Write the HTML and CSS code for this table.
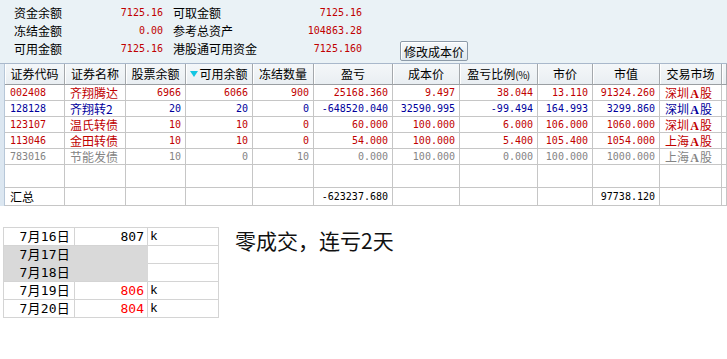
FILE: index.html
```html
<!DOCTYPE html>
<html lang="zh-CN">
<head>
<meta charset="utf-8">
<title>资金持仓</title>
<link rel="stylesheet" href="styles.css">
</head>
<body>
<div class="top">
  <div class="acct">
    <span class="lbl">资金余额</span><span class="val">7125.16</span><span class="lbl">可取金额</span><span class="val">7125.16</span><span class="sp"></span>
    <span class="lbl">冻结金额</span><span class="val">0.00</span><span class="lbl">参考总资产</span><span class="val">104863.28</span><span class="sp"></span>
    <span class="lbl">可用金额</span><span class="val">7125.16</span><span class="lbl">港股通可用资金</span><span class="val">7125.160</span><span class="sp"><button class="btn">修改成本价</button></span>
  </div>
</div>

<div class="area">
  <div class="strip"></div>
  <div class="tbl">
    <div class="row head">
      <div class="c">证券代码</div><div class="c">证券名称</div><div class="c">股票余额</div>
      <div class="c"><svg class="tri" width="8" height="7" viewBox="0 0 8 7"><path d="M0 0H8L4 6Z" fill="#12c6e2"/></svg>可用余额</div>
      <div class="c">冻结数量</div><div class="c">盈亏</div><div class="c">成本价</div>
      <div class="c">盈亏比例<span class="pct">(%)</span></div><div class="c">市价</div><div class="c">市值</div><div class="c">交易市场</div><div class="c"></div>
    </div>
    <div class="row body red">
      <div class="c n l">002408</div><div class="c t">齐翔腾达</div><div class="c n">6966</div><div class="c n">6066</div><div class="c n">900</div><div class="c n">25168.360</div><div class="c n">9.497</div><div class="c n">38.044</div><div class="c n">13.110</div><div class="c n">91324.260</div><div class="c t">深圳<b>A</b>股</div><div class="c"></div>
    </div>
    <div class="row body blue">
      <div class="c n l">128128</div><div class="c t">齐翔转2</div><div class="c n">20</div><div class="c n">20</div><div class="c n">0</div><div class="c n">-648520.040</div><div class="c n">32590.995</div><div class="c n">-99.494</div><div class="c n">164.993</div><div class="c n">3299.860</div><div class="c t">深圳<b>A</b>股</div><div class="c"></div>
    </div>
    <div class="row body red">
      <div class="c n l">123107</div><div class="c t">温氏转债</div><div class="c n">10</div><div class="c n">10</div><div class="c n">0</div><div class="c n">60.000</div><div class="c n">100.000</div><div class="c n">6.000</div><div class="c n">106.000</div><div class="c n">1060.000</div><div class="c t">深圳<b>A</b>股</div><div class="c"></div>
    </div>
    <div class="row body red">
      <div class="c n l">113046</div><div class="c t">金田转债</div><div class="c n">10</div><div class="c n">10</div><div class="c n">0</div><div class="c n">54.000</div><div class="c n">100.000</div><div class="c n">5.400</div><div class="c n">105.400</div><div class="c n">1054.000</div><div class="c t">上海<b>A</b>股</div><div class="c"></div>
    </div>
    <div class="row body gray">
      <div class="c n l">783016</div><div class="c t">节能发债</div><div class="c n">10</div><div class="c n">0</div><div class="c n">10</div><div class="c n">0.000</div><div class="c n">100.000</div><div class="c n">0.000</div><div class="c n">100.000</div><div class="c n">1000.000</div><div class="c t">上海<b>A</b>股</div><div class="c"></div>
    </div>
    <div class="row body empty">
      <div class="c"></div><div class="c"></div><div class="c"></div><div class="c"></div><div class="c"></div><div class="c"></div><div class="c"></div><div class="c"></div><div class="c"></div><div class="c"></div><div class="c"></div><div class="c"></div>
    </div>
    <div class="row body sum">
      <div class="c t">汇总</div><div class="c"></div><div class="c"></div><div class="c"></div><div class="c"></div><div class="c n">-623237.680</div><div class="c"></div><div class="c"></div><div class="c"></div><div class="c n">97738.120</div><div class="c"></div><div class="c"></div>
    </div>
  </div>
</div>

<div class="bottom">
  <div class="xl">
    <div class="x d">7月16日</div><div class="x v">807</div><div class="x k">k</div>
    <div class="x d g">7月17日</div><div class="x g"></div><div class="x k"></div>
    <div class="x d g gb">7月18日</div><div class="x g gb"></div><div class="x k"></div>
    <div class="x d">7月19日</div><div class="x v r">806</div><div class="x k">k</div>
    <div class="x d">7月20日</div><div class="x v r">804</div><div class="x k">k</div>
  </div>
  <div class="note">零成交，连亏2天</div>
</div>
</body>
</html>
```

FILE: styles.css
```css
* { box-sizing: border-box; }
html, body { margin: 0; padding: 0; background: #fff; }
body {
  font-family: "Noto Sans CJK SC", "DejaVu Sans", sans-serif;
  font-size: 12px;
  color: #000;
  width: 727px;
  overflow: hidden;
}

/* ---------- top account panel ---------- */
.top {
  height: 64px;
  background: #eaf2f6;
  border-bottom: 1px solid #a9b8cb;
  padding: 4px 0 0 14px;
}
.acct {
  display: grid;
  grid-template-columns: 60px 89px 80px 119px 1fr;
  grid-template-rows: repeat(3, 18px);
}
.acct > span { line-height: 18px; white-space: nowrap; }
.acct .lbl:nth-child(5n+3) { padding-left: 10px; }
.acct .val {
  text-align: right;
  color: #c00000;
  font-family: "DejaVu Sans Mono", monospace;
  font-size: 10px;
}
.btn {
  margin: 1px 0 0 38px;
  width: 68px;
  height: 20px;
  padding: 0;
  font-family: "Noto Sans CJK SC", sans-serif;
  font-size: 12px;
  line-height: 17px;
  color: #000;
  background: linear-gradient(#f6f9fb, #dfe8ee);
  border: 1px solid #8c9aa8;
  border-radius: 2px;
  box-shadow: inset 1px 1px 0 #fff;
}

/* ---------- holdings table ---------- */
.area { display: flex; }
.strip {
  width: 5px;
  background: #dce7f1;
  border-right: 1px solid #b7c7d8;
}
.tbl { flex: 1; }
.row {
  display: grid;
  grid-template-columns: 60px 61px 60px 67px 61px 79px 67px 78px 55px 67px 62px 1fr;
}
.c {
  border-right: 1px solid #c6c6c6;
  border-bottom: 1px solid #c6c6c6;
  white-space: nowrap;
}
.head .c {
  height: 21px;
  line-height: 20px;
  text-align: center;
  background: linear-gradient(#f4f7f9, #e9eef2);
  border-right-color: #a4a8ac;
  border-bottom-color: #9a9ea2;
  box-shadow: inset 1px 0 0 #fff;
}
.head .pct { font-size: 10px; letter-spacing: -0.5px; }
.tri { vertical-align: 1px; margin-right: 1px; }
.body .c { height: 16px; line-height: 15px; }
.body .n {
  text-align: right;
  padding-right: 4px;
  font-family: "DejaVu Sans Mono", monospace;
  font-size: 10px;
}
.body .n.l { text-align: left; padding-left: 5px; padding-right: 0; }
.body .t { padding-left: 5px; }
.body .t b {
  display: inline-block;
  width: 11px;
  text-align: center;
  font-family: "Liberation Serif", serif;
  font-weight: bold;
  font-size: 12px;
}
.red { color: #c00000; }
.blue { color: #00009c; }
.gray { color: #848484; }
.empty .c { height: 23px; }
.sum .c { height: 18px; line-height: 17px; }

/* ---------- bottom sheet ---------- */
.bottom {
  display: flex;
  align-items: flex-start;
  padding: 21px 0 0 3px;
}
.xl {
  display: grid;
  grid-template-columns: 71px 73px 71px;
  grid-template-rows: repeat(5, 18px);
  border-top: 1px solid #d4d4d4;
  border-left: 1px solid #d4d4d4;
  font-size: 13px;
}
.x {
  border-right: 1px solid #d4d4d4;
  border-bottom: 1px solid #d4d4d4;
  line-height: 17px;
  white-space: nowrap;
}
.x.d {
  text-align: right;
  padding-right: 4px;
  font-family: "DejaVu Sans Mono", "Noto Sans CJK SC", monospace;
  letter-spacing: 0.2px;
}
.x.v {
  text-align: right;
  padding-right: 3px;
  font-family: "DejaVu Sans Mono", monospace;
}
.x.r { color: #ff0000; }
.x.k {
  padding-left: 2px;
  font-family: "Liberation Mono", monospace;
  font-size: 13px;
}
.x.g {
  background: #d9d9d9;
  border-color: #d9d9d9;
}
.x.g.gb { border-bottom-color: #d4d4d4; }
.note {
  margin: 0 0 0 16px;
  font-size: 21px;
  line-height: 26px;
  color: #111;
  font-family: "Noto Sans CJK SC", sans-serif;
}
```
